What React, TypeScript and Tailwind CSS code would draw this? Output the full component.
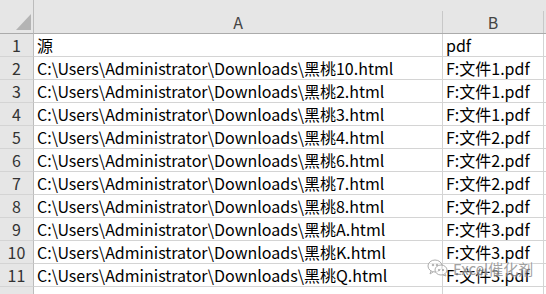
import React from "react";

const rows: [string, string][] = [
  ["源", "pdf"],
  ["C:\\Users\\Administrator\\Downloads\\黑桃10.html", "F:文件1.pdf"],
  ["C:\\Users\\Administrator\\Downloads\\黑桃2.html", "F:文件1.pdf"],
  ["C:\\Users\\Administrator\\Downloads\\黑桃3.html", "F:文件1.pdf"],
  ["C:\\Users\\Administrator\\Downloads\\黑桃4.html", "F:文件2.pdf"],
  ["C:\\Users\\Administrator\\Downloads\\黑桃6.html", "F:文件2.pdf"],
  ["C:\\Users\\Administrator\\Downloads\\黑桃7.html", "F:文件2.pdf"],
  ["C:\\Users\\Administrator\\Downloads\\黑桃8.html", "F:文件2.pdf"],
  ["C:\\Users\\Administrator\\Downloads\\黑桃A.html", "F:文件3.pdf"],
  ["C:\\Users\\Administrator\\Downloads\\黑桃K.html", "F:文件3.pdf"],
  ["C:\\Users\\Administrator\\Downloads\\黑桃Q.html", "F:文件3.pdf"],
];

const font = { fontFamily: '"Noto Sans CJK SC", "Noto Sans", sans-serif' };

export default function App() {
  return (
    <div
      className="relative w-[546px] h-[294px] overflow-hidden bg-white text-[16px] text-black"
      style={font}
    >
      <div className="grid grid-cols-[34px_409px_101px_2px]">
        {/* header */}
        <div className="relative h-[34px] bg-[#e6e6e6] border-b border-r border-[#ababab] border-r-[#bcbcbc]">
          <svg className="absolute left-[16px] top-[14px]" width="15" height="16" viewBox="0 0 15 16">
            <polygon points="15,0 15,16 0,16" fill="#b4b4b4" />
          </svg>
        </div>
        <div className="h-[34px] bg-[#e6e6e6] border-b border-[#ababab] flex flex-col">
          <div className="h-[11px]" />
          <div className="flex-1 border-r border-[#c8c8c8] flex items-center justify-center text-[#444] leading-none pb-[1px]">
            A
          </div>
        </div>
        <div className="h-[34px] bg-[#e6e6e6] border-b border-[#ababab] flex flex-col">
          <div className="h-[11px]" />
          <div className="flex-1 border-r border-[#c8c8c8] flex items-center justify-center text-[#444] leading-none pb-[1px]">
            B
          </div>
        </div>
        <div className="h-[34px] bg-[#e6e6e6] border-b border-[#ababab]" />

        {rows.map(([a, b], i) => (
          <React.Fragment key={i}>
            <div className="h-[23px] bg-[#e6e6e6] border-b border-r border-[#d4d4d4] border-r-[#bcbcbc] flex items-center justify-center text-[#333] leading-none">
              {i + 1}
            </div>
            <div className="h-[23px] border-b border-r border-[#d4d4d4] flex items-center pl-[3px] leading-none whitespace-nowrap overflow-hidden">
              {a}
            </div>
            <div className="h-[23px] border-b border-r border-[#d4d4d4] flex items-center pl-[3px] leading-none whitespace-nowrap overflow-hidden">
              {b}
            </div>
            <div className="h-[23px] border-b border-[#d4d4d4]" />
          </React.Fragment>
        ))}
        <div className="h-[23px] bg-[#e6e6e6] border-r border-[#bcbcbc]" />
        <div className="h-[23px] border-r border-[#d4d4d4]" />
        <div className="h-[23px] border-r border-[#d4d4d4]" />
        <div className="h-[23px]" />
      </div>

      {/* watermark */}
      <div className="absolute left-[427px] top-[258px] flex items-center gap-[4px] opacity-80">
        <svg width="22" height="20" viewBox="0 0 22 20" fill="none" stroke="#9a9a9a" strokeWidth="1">
          <ellipse cx="8" cy="8" rx="7" ry="6" fill="rgba(255,255,255,0.6)" />
          <path d="M4 13 L3 16 L6 14" />
          <ellipse cx="14" cy="12" rx="6" ry="5" fill="rgba(255,255,255,0.6)" />
          <path d="M18 16 L19 18 L16 17" />
          <circle cx="6" cy="7" r="0.8" fill="#9a9a9a" />
          <circle cx="10" cy="7" r="0.8" fill="#9a9a9a" />
          <circle cx="12" cy="12" r="0.7" fill="#9a9a9a" />
          <circle cx="16" cy="12" r="0.7" fill="#9a9a9a" />
        </svg>
        <span
          className="text-[15px] text-[#8a8a8a] leading-none"
          style={{ textShadow: "0 0 2px #fff, 0 0 2px #fff" }}
        >
          Excel催化剂
        </span>
      </div>
    </div>
  );
}
